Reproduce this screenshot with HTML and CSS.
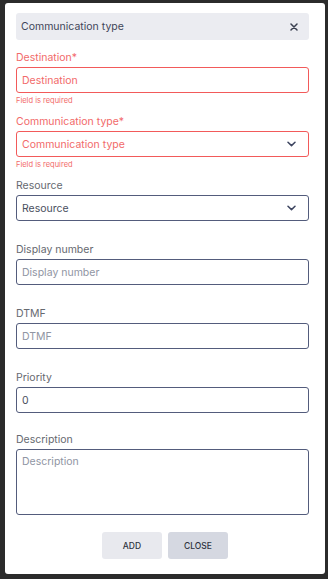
FILE: index.html
```html
<!DOCTYPE html>
<html>
<head>
<meta charset="utf-8">
<link rel="stylesheet" href="styles.css">
</head>
<body>
<div class="backdrop">
  <div class="modal">
    <div class="header">
      <span class="title">Communication type</span>
      <svg class="close" width="8" height="8" viewBox="0 0 8 8"><path d="M1 1L7 7M7 1L1 7" stroke="#3a4050" stroke-width="1.5" stroke-linecap="round"/></svg>
    </div>
    <div class="field error">
      <div class="label">Destination*</div>
      <div class="input"><span class="ph">Destination</span></div>
      <div class="help">Field is required</div>
    </div>
    <div class="field error">
      <div class="label">Communication type*</div>
      <div class="input select"><span class="ph">Communication type</span><svg class="chev" width="9" height="6" viewBox="0 0 9 6"><path d="M1 1.2L4.5 4.6L8 1.2" fill="none" stroke="#3d4560" stroke-width="1.5" stroke-linecap="round" stroke-linejoin="round"/></svg></div>
      <div class="help">Field is required</div>
    </div>
    <div class="field">
      <div class="label">Resource</div>
      <div class="input select"><span class="val">Resource</span><svg class="chev" width="9" height="6" viewBox="0 0 9 6"><path d="M1 1.2L4.5 4.6L8 1.2" fill="none" stroke="#3d4560" stroke-width="1.5" stroke-linecap="round" stroke-linejoin="round"/></svg></div>
      <div class="help"></div>
    </div>
    <div class="field">
      <div class="label">Display number</div>
      <div class="input"><span class="ph">Display number</span></div>
      <div class="help"></div>
    </div>
    <div class="field">
      <div class="label">DTMF</div>
      <div class="input"><span class="ph">DTMF</span></div>
      <div class="help"></div>
    </div>
    <div class="field">
      <div class="label">Priority</div>
      <div class="input"><span class="val">0</span></div>
      <div class="help short"></div>
    </div>
    <div class="field">
      <div class="label">Description</div>
      <div class="input textarea"><span class="ph">Description</span></div>
    </div>
    <div class="actions">
      <button class="btn add">ADD</button>
      <button class="btn close-btn">CLOSE</button>
    </div>
  </div>
</div>
</body>
</html>
```
FILE: styles.css
```css
html, body {
  margin: 0;
  padding: 0;
  background: #2b2b2b;
}
body {
  font-family: Inter, "Noto Sans", sans-serif;
  width: 328px;
  height: 579px;
  overflow: hidden;
}
.backdrop {
  padding: 3px 3px 6px 5px;
}
.modal {
  background: #fff;
  width: 320px;
  height: 571px;
  box-sizing: border-box;
  border-radius: 3px;
  padding: 10px 16px 0 11px;
}
.header {
  height: 27px;
  background: #ebecf1;
  border-radius: 3px;
  display: flex;
  align-items: center;
  justify-content: space-between;
  padding: 0 11px 0 5px;
  margin-bottom: 11px;
}
.title {
  font-size: 10.5px;
  color: #3f4659;
}
.field {
  display: flex;
  flex-direction: column;
}
.label {
  font-size: 10.5px;
  line-height: 14px;
  color: #666970;
  margin-bottom: 2px;
}
.input {
  height: 26px;
  box-sizing: border-box;
  border: 1px solid #535c7c;
  border-radius: 3px;
  display: flex;
  align-items: center;
  justify-content: space-between;
  padding: 0 12px 0 5px;
  font-size: 10.5px;
}
.textarea {
  height: 66px;
  align-items: flex-start;
  padding-top: 5px;
}
.ph { color: #9095a3; }
.val { color: #4a4f5e; }
.help {
  height: 22px;
  font-size: 7.5px;
  line-height: 10px;
  padding-top: 3px;
  box-sizing: border-box;
}
.help.short { height: 20px; }
.error .label { color: #f26a6a; }
.error .input { border-color: #f25a5a; }
.error .ph { color: #f26a6a; }
.error .help { color: #f26a6a; }
.actions {
  display: flex;
  justify-content: center;
  gap: 6px;
  margin: 17px -16px 0 -11px;
}
.btn {
  width: 60px;
  height: 27px;
  border: none;
  border-radius: 3px;
  font-family: inherit;
  font-size: 8.5px;
  font-weight: 500;
  color: #2d3340;
  padding: 0;
}
.add { background: #e8e9ee; }
.close-btn { background: #d5d8e1; }
```
